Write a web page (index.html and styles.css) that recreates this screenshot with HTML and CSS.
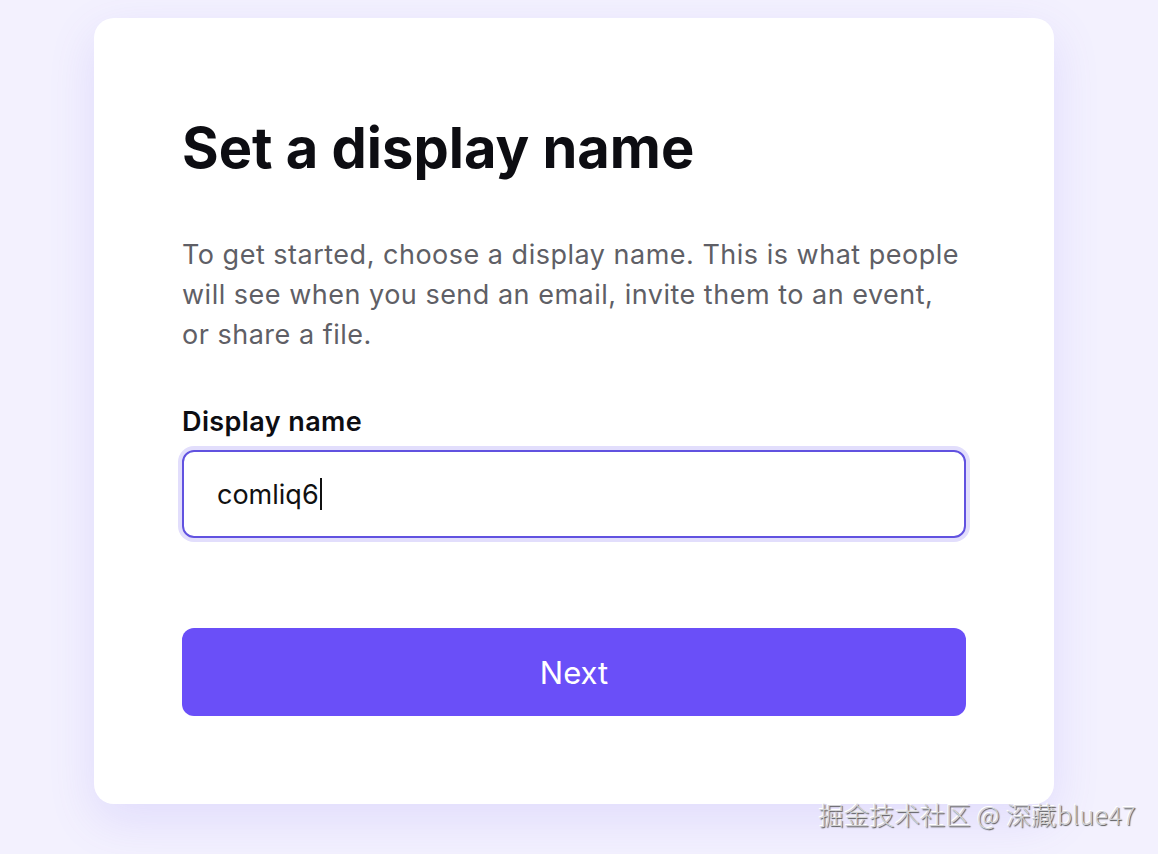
FILE: index.html
```html
<!DOCTYPE html>
<html lang="en">
<head>
    <meta charset="UTF-8">
    <meta name="viewport" content="width=device-width, initial-scale=1.0">
    <title>Set a display name</title>
    <link rel="stylesheet" href="styles.css">
</head>
<body>
    <div class="card">
        <h1 class="title">Set a display name</h1>
        <p class="intro">To get started, choose a display name. This is what people will see when you send an email, invite them to an event, or share a file.</p>

        <label class="field-label" for="displayName">Display name</label>
        <div class="field">
            <span class="field-value">comliq6</span><span class="caret"></span>
        </div>

        <button class="next-button">Next</button>
    </div>

    <!-- watermark from the screenshot -->
    <div class="watermark">掘金技术社区 @ 深藏blue47</div>
</body>
</html>
```

FILE: styles.css
```css
html, body {
    height: 100%;
}

body {
    font-family: Inter, "Noto Sans", sans-serif;
    background-color: #f3f1fe;
    color: #0d0d12;
    margin: 0;
    padding: 18px 0 0 94px;
    box-sizing: border-box;
    overflow: hidden;
    position: relative;
}

.card {
    width: 960px;
    height: 786px;
    box-sizing: border-box;
    background-color: #fff;
    border-radius: 20px;
    box-shadow: 0 16px 48px rgba(112, 92, 240, 0.14);
    padding: 97px 88px 88px;
    display: flex;
    flex-direction: column;
}

.title {
    font-size: 56px;
    line-height: 67px;
    font-weight: 700;
    margin: 0;
    color: #0d0d12;
}

.intro {
    font-size: 27px;
    line-height: 40px;
    letter-spacing: 0.5px;
    color: #5f5f66;
    margin: 53px 0 0;
    max-width: 784px;
}

.field-label {
    font-size: 27px;
    line-height: 32px;
    font-weight: 600;
    letter-spacing: 0.4px;
    margin-top: 51px;
    color: #0d0d12;
}

.field {
    margin-top: 12px;
    height: 88px;
    box-sizing: border-box;
    border: 2px solid #6152e0;
    border-radius: 12px;
    box-shadow: 0 0 0 4px #e2defc;
    padding: 0 33px;
    display: flex;
    align-items: center;
    font-size: 27px;
    color: #111;
}

.caret {
    display: inline-block;
    width: 2px;
    height: 32px;
    background-color: #111;
    margin-left: 1px;
}

.next-button {
    margin-top: 90px;
    height: 88px;
    border: none;
    border-radius: 12px;
    background-color: #6a4ff8;
    color: #fff;
    font-family: Inter, "Noto Sans", sans-serif;
    font-size: 31px;
    cursor: pointer;
}

.watermark {
    position: absolute;
    right: 22px;
    bottom: 22px;
    font-family: "Noto Sans CJK SC", "Noto Sans", sans-serif;
    font-size: 25px;
    font-weight: 300;
    letter-spacing: 0.4px;
    color: #d2d2d6;
    text-shadow: 1px 1px 1px #555, -1px -1px 0 #fff;
}
```
